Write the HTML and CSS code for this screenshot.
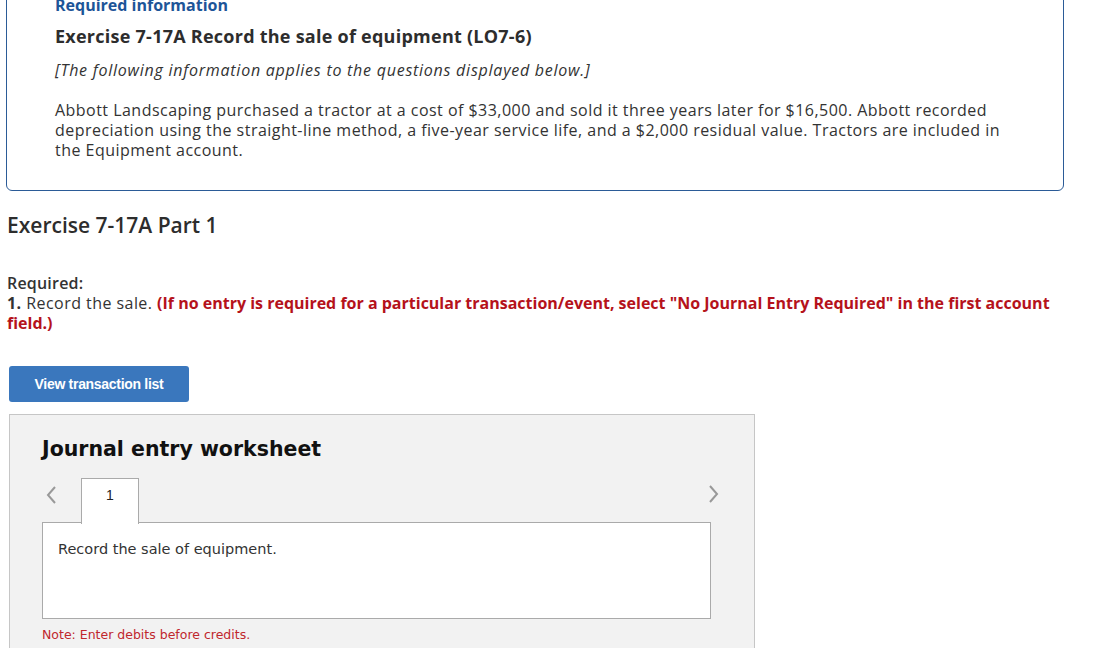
FILE: index.html
```html
<!DOCTYPE html>
<html lang="en">
<head>
    <meta charset="UTF-8">
    <meta name="viewport" content="width=device-width, initial-scale=1.0">
    <title>Exercise 7-17A</title>
    <link rel="stylesheet" href="styles.css">
</head>
<body>
    <div class="info-box">
        <div class="req-info">Required information</div>
        <h2 class="info-title">Exercise 7-17A Record the sale of equipment (LO7-6)</h2>
        <p class="info-note">[The following information applies to the questions displayed below.]</p>
        <p class="info-text">Abbott Landscaping purchased a tractor at a cost of $33,000 and sold it three years later for $16,500. Abbott recorded depreciation using the straight-line method, a five-year service life, and a $2,000 residual value. Tractors are included in the Equipment account.</p>
    </div>

    <h2 class="part-title">Exercise 7-17A Part 1</h2>

    <div class="question">
        <div class="required">Required:</div>
        <div><b>1.</b> Record the sale. <span class="instr">(If no entry is required for a particular transaction/event, select "No Journal Entry Required" in the first account field.)</span></div>
    </div>

    <button class="btn-list" type="button">View transaction list</button>

    <div class="worksheet">
        <h3 class="ws-title">Journal entry worksheet</h3>
        <div class="ws-nav">
            <span class="arrow arrow-left">
                <svg width="12" height="20" viewBox="0 0 12 20"><path d="M10 2 L3 10 L10 18" fill="none" stroke="#999" stroke-width="2"/></svg>
            </span>
            <div class="tab">1</div>
            <span class="arrow arrow-right">
                <svg width="12" height="20" viewBox="0 0 12 20"><path d="M2 2 L9 10 L2 18" fill="none" stroke="#999" stroke-width="2"/></svg>
            </span>
        </div>
        <div class="ws-content">Record the sale of equipment.</div>
        <div class="ws-note">Note: Enter debits before credits.</div>
    </div>
</body>
</html>
```

FILE: styles.css
```css
body {
    margin: 0;
    font-family: "Open Sans", Arial, sans-serif;
    color: #333;
    background: #fff;
}
.info-box {
    margin: -16px 30px 0 6px;
    padding: 8px 60px 30px 48px;
    border: 1px solid #2b5b97;
    border-radius: 0 0 6px 6px;
}
.req-info {
    color: #1d5598;
    font-weight: 700;
    font-size: 16px;
    line-height: 24px;
}
.info-title {
    margin: 6px 0 0;
    font-size: 18px;
    font-weight: 700;
    line-height: 26px;
    letter-spacing: 0.25px;
    color: #2d2d2d;
}
.info-note {
    margin: 11px 0 0;
    font-style: italic;
    font-size: 16px;
    line-height: 20px;
    letter-spacing: 0.75px;
}
.info-text {
    margin: 20px 0 0;
    font-size: 16px;
    line-height: 20px;
    letter-spacing: 0.47px;
}
.part-title {
    margin: 20px 0 0 7px;
    font-size: 21px;
    font-weight: 600;
    line-height: 28px;
    color: #2d2d2d;
}
.question {
    margin: 34px 0 0 7px;
    font-size: 16px;
    line-height: 20px;
    padding-right: 30px;
    letter-spacing: 0.45px;
}
.required {
    font-weight: 600;
    letter-spacing: 0.2px;
}
.instr {
    color: #b5121b;
    font-weight: 700;
    letter-spacing: 0;
}
.btn-list {
    display: block;
    margin: 33px 0 0 9px;
    width: 180px;
    height: 36px;
    background: #3a77bd;
    border: none;
    border-radius: 3px;
    color: #fff;
    font-family: Arial, "Liberation Sans", sans-serif;
    font-weight: 700;
    font-size: 14px;
    letter-spacing: -0.3px;
}
.worksheet {
    margin: 12px 0 0 9px;
    width: 746px;
    height: 260px;
    background: #f2f2f2;
    border: 1px solid #c6c6c6;
    padding: 0 43px 0 32px;
    box-sizing: border-box;
    font-family: Verdana, "DejaVu Sans", sans-serif;
}
.ws-title {
    margin: 20px 0 0;
    font-size: 20.5px;
    font-weight: 700;
    line-height: 28px;
    color: #111;
}
.ws-nav {
    display: flex;
    align-items: center;
    margin-top: 14px;
    height: 45px;
}
.arrow {
    display: flex;
    width: 36px;
    padding-left: 3px;
}
.arrow-left {
    position: relative;
    top: -5px;
}
.arrow-right {
    margin-left: auto;
    margin-right: -9px;
    width: auto;
    position: relative;
    top: -6px;
}
.tab {
    width: 58px;
    height: 46px;
    box-sizing: border-box;
    background: #fff;
    border: 1px solid #aaa;
    border-bottom: none;
    text-align: center;
    font-family: Arial, "Liberation Sans", sans-serif;
    font-size: 14px;
    line-height: 32px;
    color: #222;
    position: relative;
    top: 1px;
}
.ws-content {
    height: 97px;
    box-sizing: border-box;
    background: #fff;
    border: 1px solid #aaa;
    padding: 16px 15px;
    font-size: 14.5px;
    line-height: 20px;
    color: #333;
}
.ws-note {
    margin-top: 8px;
    font-size: 12.5px;
    color: #c0272d;
}
```
